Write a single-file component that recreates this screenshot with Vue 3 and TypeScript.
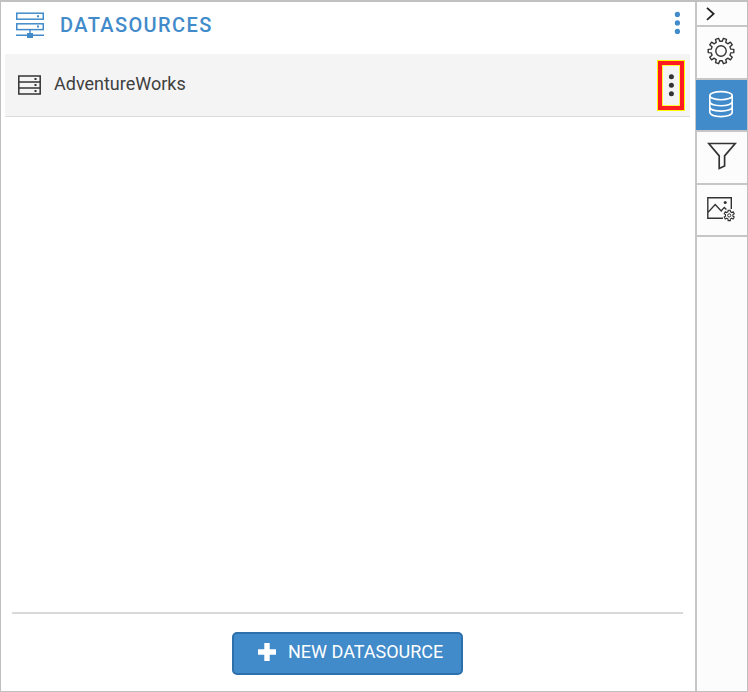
<script setup lang="ts">
function gearPath(cx: number, cy: number, outer: number, inner: number, teeth: number, offset: number): string {
  const step = (Math.PI * 2) / teeth
  const points: string[] = []
  for (let i = 0; i < teeth; i++) {
    const mid = offset + i * step
    const corners: [number, number][] = [
      [inner, -0.3],
      [outer, -0.2],
      [outer, 0.2],
      [inner, 0.3],
    ]
    for (const [r, f] of corners) {
      const a = mid + f * step
      points.push(`${(cx + r * Math.cos(a)).toFixed(2)} ${(cy + r * Math.sin(a)).toFixed(2)}`)
    }
  }
  return `M${points.join('L')}Z`
}

const settingsGear = gearPath(14, 14, 12.9, 9.9, 10, 0)
const imageGear = gearPath(22.2, 18.4, 5.3, 3.8, 6, Math.PI / 6)
</script>

<template>
  <div class="designer">
    <main class="panel">
      <header class="head">
        <svg class="head-icon" width="28" height="27" viewBox="0 0 28 27">
          <g fill="none" stroke="#428bca" stroke-width="1.5">
            <rect x=".75" y="1.2" width="26.5" height="6" />
            <rect x=".75" y="11.8" width="26.5" height="5.8" />
            <path d="M14 17.5V22M0 23.2H28" />
          </g>
          <path d="M11 21h6v5h-6zM21 3.3h2v2h-2zM21 13.6h2v2h-2z" fill="#428bca" />
        </svg>
        <h1 class="title">DATASOURCES</h1>
        <svg class="head-menu" width="6" height="24" viewBox="0 0 6 24" fill="#428bca">
          <circle cx="3.4" cy="3.4" r="2.6" />
          <circle cx="3.4" cy="11.9" r="2.6" />
          <circle cx="3.4" cy="20.4" r="2.6" />
        </svg>
      </header>
      <div class="source">
        <svg class="source-icon" width="23" height="20" viewBox="0 0 23 20">
          <path d="M.8.9H22.2V19.1H.8ZM.8 7H22.2M.8 13H22.2" fill="none" stroke="#333" stroke-width="1.5" />
          <path d="M16.5 3.1h2v2h-2zM16.5 9h2v2h-2zM16.5 15h2v2h-2z" fill="#333" />
        </svg>
        <span class="name">AdventureWorks</span>
        <div class="source-menu">
          <svg width="6" height="24" viewBox="0 0 6 24" fill="#333">
            <circle cx="3.4" cy="2.8" r="2.5" />
            <circle cx="3.4" cy="11.3" r="2.5" />
            <circle cx="3.4" cy="19.8" r="2.5" />
          </svg>
        </div>
      </div>
      <div class="space"></div>
      <footer class="foot">
        <button class="add" type="button">
          <svg width="18" height="18" viewBox="0 0 18 18">
            <path d="M6.3 0h5.4v6.3H18v5.4h-6.3V18H6.3v-6.3H0V6.3h6.3z" fill="#fff" />
          </svg>
          <span>NEW DATASOURCE</span>
        </button>
      </footer>
    </main>
    <nav class="rail">
      <div class="tab collapse">
        <svg width="10" height="14" viewBox="0 0 10 14">
          <path d="M1 .8L7.6 6.8L1 12.8" fill="none" stroke="#222" stroke-width="1.8" />
        </svg>
      </div>
      <div class="tab gear">
        <svg width="28" height="28" viewBox="0 0 28 28" fill="none" stroke="#333" stroke-width="1.4">
          <path :d="settingsGear" stroke-linejoin="round" />
          <circle cx="14" cy="14" r="5.2" />
        </svg>
      </div>
      <div class="tab active">
        <svg width="26" height="28" viewBox="0 0 26 28" fill="none" stroke="#fff" stroke-width="1.6">
          <ellipse cx="13" cy="5.7" rx="11.2" ry="4.1" />
          <path d="M1.8 5.7V22.3C1.8 28 24.2 28 24.2 22.3V5.7M1.8 11.6C1.8 17.1 24.2 17.1 24.2 11.6M1.8 17C1.8 22.5 24.2 22.5 24.2 17" />
        </svg>
      </div>
      <div class="tab filter">
        <svg width="30" height="28" viewBox="0 0 30 28">
          <path d="M1.8 1.5H28.2L17.6 13.9V24L12.2 26.5V13.9Z" fill="none" stroke="#333" stroke-width="1.7" />
        </svg>
      </div>
      <div class="tab image">
        <svg width="28" height="25" viewBox="0 0 28 25" fill="none" stroke="#333" stroke-width="1.4">
          <path d="M16 21.3H.8V.8H24.3V12M.8 15.6L8.2 7.5L14.2 14L17.3 10.4L19.4 12.4" />
          <circle cx="18.2" cy="5.5" r="1.5" fill="#333" stroke="none" />
          <path :d="imageGear" stroke-width="1.1" />
          <circle cx="22.2" cy="18.4" r="1.6" stroke-width="1" />
        </svg>
      </div>
    </nav>
  </div>
</template>

<style>
body {
  margin: 0;
}
</style>

<style scoped>
.designer {
  box-sizing: border-box;
  display: flex;
  width: 748px;
  height: 692px;
  border: 1px solid #c0c0c0;
  border-top-width: 2px;
  background: #fff;
  font-family: Roboto, sans-serif;
}
.panel {
  flex: 1;
  display: flex;
  flex-direction: column;
}
.head {
  display: flex;
  align-items: flex-start;
  height: 52px;
  padding: 0 15px;
}
.head-icon {
  margin-top: 10px;
}
.title {
  margin: 11px auto 0 16px;
  font-size: 20px;
  line-height: 24px;
  font-weight: 500;
  letter-spacing: 1.38px;
  color: #428bca;
}
.head-menu {
  margin: 9px 0 0;
}
.source {
  box-sizing: border-box;
  display: flex;
  align-items: flex-start;
  height: 63px;
  margin: 0 5px 0 4px;
  padding: 6px 5px 0 13px;
  background: #f4f4f4;
  border-bottom: 1px solid #dcdcdc;
}
.source-icon {
  margin-top: 15px;
}
.name {
  margin: 12px auto 0 13px;
  font-size: 18px;
  line-height: 24px;
  color: #404040;
}
.source-menu {
  box-sizing: border-box;
  display: flex;
  align-items: center;
  justify-content: center;
  width: 28px;
  height: 51px;
  background: #f4f4f4;
  border: 5px solid #ff1c20;
  outline: 1px solid #ff0;
  outline-offset: -1px;
  box-shadow: inset 0 0 0 1px #fff83c;
}
.space {
  flex: 1;
}
.foot {
  box-sizing: border-box;
  display: flex;
  justify-content: center;
  height: 79px;
  margin: 0 12px 0 11px;
  padding-top: 18px;
  border-top: 2px solid #d9d9d9;
}
.add {
  box-sizing: border-box;
  display: flex;
  align-items: center;
  gap: 12px;
  width: 231px;
  height: 43px;
  padding: 0 0 3px 24px;
  border: 2px solid #2e70ac;
  border-radius: 5px;
  background: #428bca;
  color: #fff;
  font: 400 18px/24px Roboto, sans-serif;
  white-space: nowrap;
}
.rail {
  box-sizing: border-box;
  width: 52px;
  border-left: 2px solid #c6c6c6;
  background: #fcfcfc;
}
.tab {
  box-sizing: border-box;
  display: flex;
  align-items: center;
  justify-content: center;
  height: 53px;
  border-bottom: 2px solid #c6c6c6;
}
.collapse {
  height: 25px;
  justify-content: flex-start;
  padding-left: 9px;
}
.gear {
  padding-right: 3px;
  padding-bottom: 3px;
}
.active {
  height: 52px;
  margin-left: -1px;
  padding: 0 1px 2px 0;
  background: #428bca;
}
.filter {
  padding-bottom: 3px;
}
.image {
  height: 52px;
  padding: 0 2px 2px 0;
}
</style>
